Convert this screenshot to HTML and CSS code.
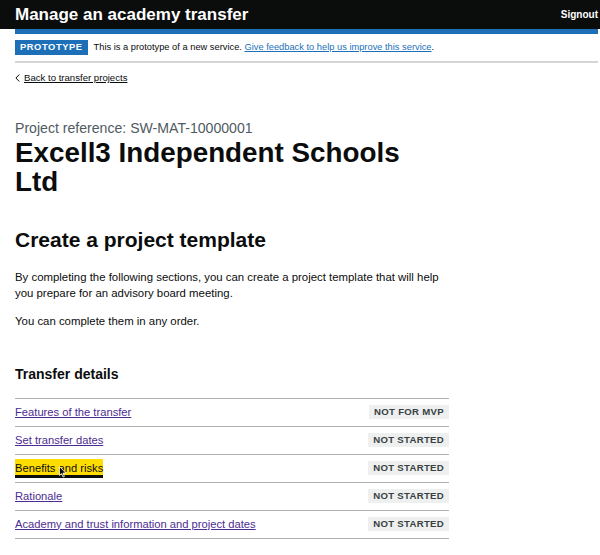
FILE: index.html
```html
<!DOCTYPE html>
<html lang="en">
<head>
<meta charset="utf-8">
<title>Manage an academy transfer</title>
<link rel="stylesheet" href="styles.css">
</head>
<body>
<header class="header">
  <div class="header-inner">
    <a class="service-name" href="#">Manage an academy transfer</a>
    <a class="signout" href="#">Signout</a>
  </div>
</header>
<div class="page">
  <div class="phase-banner">
    <strong class="phase-tag">PROTOTYPE</strong>
    <span class="phase-text">This is a prototype of a new service. <a href="#" class="phase-link">Give feedback to help us improve this service</a>.</span>
  </div>
  <a href="#" class="back-link"><svg class="back-chevron" width="5" height="8" viewBox="0 0 5 8"><polyline points="4.3,0.5 0.9,4 4.3,7.5" fill="none" stroke="#0b0c0c" stroke-width="1"/></svg><span class="back-text">Back to transfer projects</span></a>
  <main class="column">
    <span class="caption">Project reference: SW-MAT-10000001</span>
    <h1 class="title">Excell3 Independent Schools Ltd</h1>
    <h2 class="subtitle">Create a project template</h2>
    <p class="body first">By completing the following sections, you can create a project template that will help you prepare for an advisory board meeting.</p>
    <p class="body second">You can complete them in any order.</p>
    <h3 class="section-title">Transfer details</h3>
    <ul class="task-list">
      <li class="task"><a href="#" class="task-link">Features of the transfer</a><strong class="tag">NOT FOR MVP</strong></li>
      <li class="task"><a href="#" class="task-link">Set transfer dates</a><strong class="tag">NOT STARTED</strong></li>
      <li class="task"><a href="#" class="task-link focused">Benefits and risks<svg class="cursor" width="8" height="12" viewBox="0 0 8 12"><path d="M0.5 0.5 L0.5 9.5 L2.6 7.6 L4.1 11 L5.4 10.4 L3.9 7.1 L6.8 7.1 Z" fill="#0b0c0c" stroke="#fff" stroke-width="0.8"/></svg></a><strong class="tag">NOT STARTED</strong></li>
      <li class="task"><a href="#" class="task-link">Rationale</a><strong class="tag">NOT STARTED</strong></li>
      <li class="task"><a href="#" class="task-link">Academy and trust information and project dates</a><strong class="tag">NOT STARTED</strong></li>
    </ul>
  </main>
</div>
</body>
</html>
```
FILE: styles.css
```css
html, body {
  margin: 0;
  padding: 0;
  background: #fff;
}
body {
  font-family: "Liberation Sans", Arial, sans-serif;
  color: #0b0c0c;
}
.header {
  background: #0b0c0c;
  border-bottom: 5px solid #fff;
}
.header-inner {
  margin: 0 2px -5px 15px;
  height: 29px;
  display: flex;
  align-items: center;
  justify-content: space-between;
  border-bottom: 5px solid #1d70b8;
}
.service-name {
  color: #fff;
  font-weight: 700;
  font-size: 17px;
  line-height: 20px;
  text-decoration: none;
}
.signout {
  color: #fff;
  font-weight: 700;
  font-size: 10px;
  line-height: 14px;
  text-decoration: none;
}
.page {
  margin: 0 2px 0 15px;
}
.phase-banner {
  display: flex;
  align-items: center;
  padding: 6px 0;
  border-bottom: 2px solid #d4d5d6;
  font-size: 9.3px;
  line-height: 15px;
}
.phase-tag {
  display: inline-block;
  background: #1d70b8;
  color: #fff;
  font-weight: 700;
  letter-spacing: 0.6px;
  padding: 0 5px;
  height: 15px;
  line-height: 15px;
  margin-right: 6px;
}
.phase-link {
  color: #1d70b8;
  text-decoration: underline;
}
.back-link {
  display: inline-flex;
  align-items: center;
  gap: 4px;
  margin-top: 8px;
  font-size: 9.6px;
  line-height: 14px;
  color: #0b0c0c;
  text-decoration: none;
}
.back-text {
  text-decoration: underline;
}
.column {
  width: 434px;
}
.caption {
  display: block;
  margin-top: 33px;
  font-size: 14.1px;
  line-height: 18px;
  color: #505a5f;
}
.title {
  margin: 1px 0 0;
  font-size: 27.8px;
  line-height: 29px;
  font-weight: 700;
}
.subtitle {
  margin: 31px 0 0;
  font-size: 21px;
  line-height: 26px;
  font-weight: 700;
}
.body {
  margin: 0;
  font-size: 11.4px;
  line-height: 16px;
}
.body.first {
  margin-top: 16px;
}
.body.second {
  margin-top: 12px;
}
.section-title {
  margin: 36px 0 0;
  font-size: 14px;
  line-height: 18px;
  font-weight: 700;
}
.task-list {
  margin: 15px 0 0;
  padding: 0;
  list-style: none;
  border-top: 1px solid #b1b4b6;
}
.task {
  display: flex;
  align-items: center;
  justify-content: space-between;
  height: 27px;
  border-bottom: 1px solid #b1b4b6;
}
.task-link {
  position: relative;
  display: block;
  font-size: 11.2px;
  line-height: 14px;
  margin-top: -2px;
  color: #4c2c92;
  text-decoration: underline;
}
.task-link.focused {
  background: #ffdd00;
  color: #0b0c0c;
  text-decoration: none;
  box-shadow: 0 -2px #ffdd00, 0 3px #0b0c0c;
}
.cursor {
  position: absolute;
  left: 44px;
  top: 5px;
}
.tag {
  display: inline-block;
  font-size: 9.6px;
  font-weight: 700;
  letter-spacing: 0.3px;
  background: #eeefef;
  color: #383f43;
  padding: 0 5px;
  line-height: 14px;
  margin-top: -1px;
}
```
